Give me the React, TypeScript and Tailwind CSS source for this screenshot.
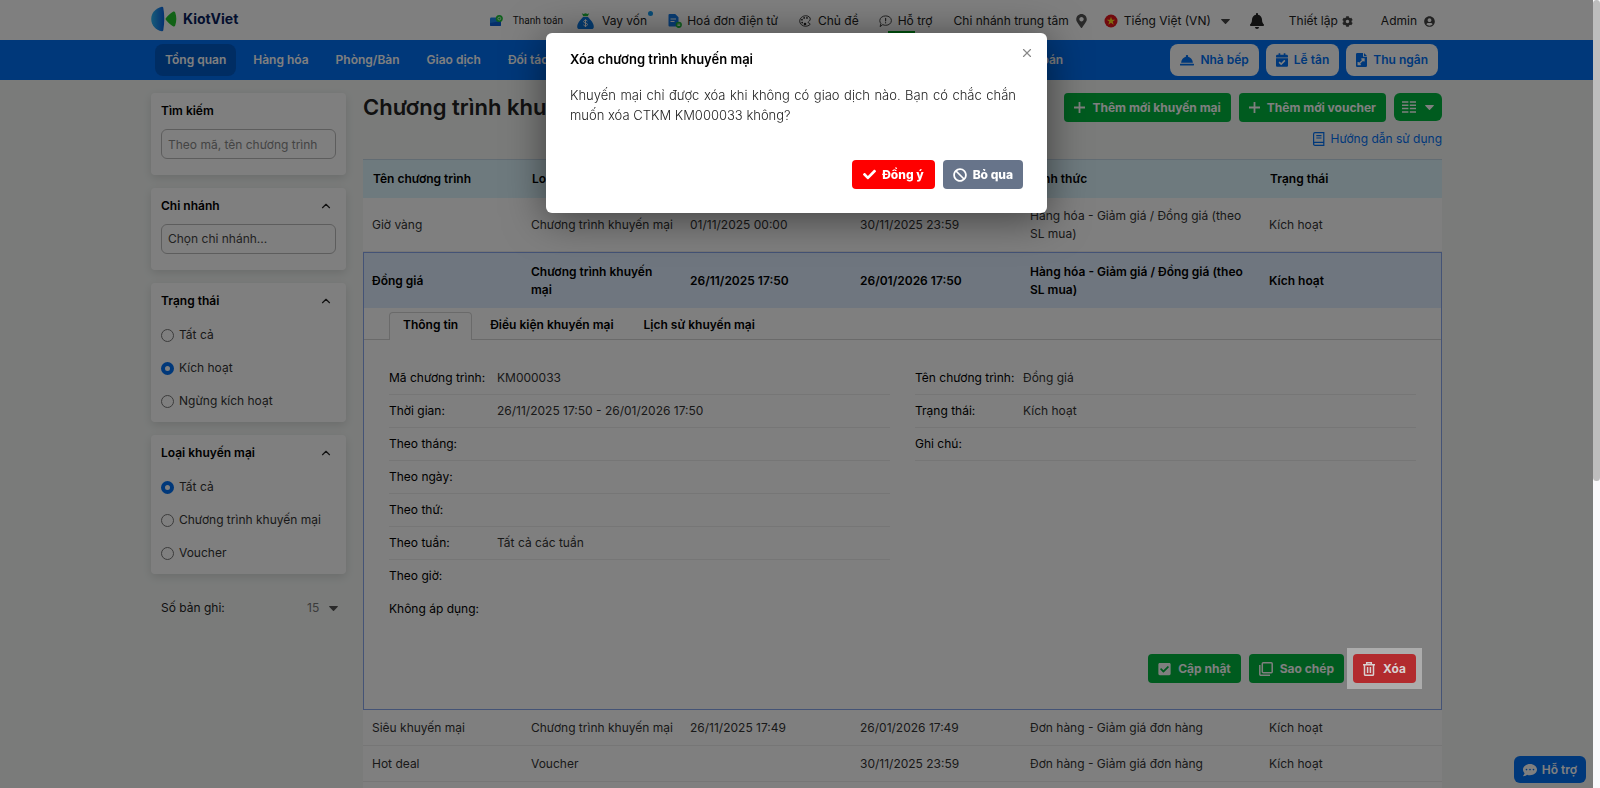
import { useState, type ReactNode } from "react";
import {
  FaBan,
  FaBell,
  FaCalendarCheck,
  FaCheck,
  FaCheckSquare,
  FaCog,
  FaCommentDots,
  FaMapMarkerAlt,
  FaUserCircle,
} from "react-icons/fa";
import { IoColorPaletteOutline } from "react-icons/io5";
import { ChevronUp, X } from "lucide-react";

const NAV_ITEMS = [
  "Tổng quan",
  "Hàng hóa",
  "Phòng/Bàn",
  "Giao dịch",
  "Đối tác",
  "Nhân viên",
  "Bán hàng",
  "Tài chính",
  "Báo cáo",
  "Phân tích",
  "Thuế & Kế toán",
];

const COLUMNS = [
  "Tên chương trình",
  "Loại chương trình",
  "Từ ngày",
  "Đến ngày",
  "Hình thức",
  "Trạng thái",
];

const ROWS = [
  {
    cells: [
      "Giờ vàng",
      "Chương trình khuyến mại",
      "01/11/2025 00:00",
      "30/11/2025 23:59",
      "Hàng hóa - Giảm giá / Đồng giá (theo SL mua)",
      "Kích hoạt",
    ],
  },
  {
    selected: true,
    cells: [
      "Đồng giá",
      "Chương trình khuyến mại",
      "26/11/2025 17:50",
      "26/01/2026 17:50",
      "Hàng hóa - Giảm giá / Đồng giá (theo SL mua)",
      "Kích hoạt",
    ],
  },
  {
    cells: [
      "Siêu khuyến mại",
      "Chương trình khuyến mại",
      "26/11/2025 17:49",
      "26/01/2026 17:49",
      "Đơn hàng - Giảm giá đơn hàng",
      "Kích hoạt",
    ],
  },
  {
    cells: [
      "Hot deal",
      "Voucher",
      "",
      "30/11/2025 23:59",
      "Đơn hàng - Giảm giá đơn hàng",
      "Kích hoạt",
    ],
  },
];

const LEFT_FIELDS = [
  ["Mã chương trình:", "KM000033"],
  ["Thời gian:", "26/11/2025 17:50 - 26/01/2026 17:50"],
  ["Theo tháng:", ""],
  ["Theo ngày:", ""],
  ["Theo thứ:", ""],
  ["Theo tuần:", "Tất cả các tuần"],
  ["Theo giờ:", ""],
  ["Không áp dụng:", ""],
];

const RIGHT_FIELDS = [
  ["Tên chương trình:", "Đồng giá"],
  ["Trạng thái:", "Kích hoạt"],
  ["Ghi chú:", ""],
];

const Logo = () => (
  <svg className="h-[26px] w-[26px]" viewBox="0 0 26 26">
    <defs>
      <linearGradient id="logoBlue" x1="0" x2="1">
        <stop offset="0" stopColor="#2fb8f5" />
        <stop offset="1" stopColor="#0a63e0" />
      </linearGradient>
    </defs>
    <path d="M10.800.7c.8-.1 1.300.3 1.500 1.100 1.300 7.300 1.300 15 0 22.400-.2.800-.7 1.200-1.500 1.100C4.600 24 .2 19 .2 13S4.600 2 10.800.7z" fill="url(#logoBlue)" />
    <path d="M14.800 12.300c2.200-2.700 4.700-4.900 7.200-6.500 1-.6 1.800-.3 2.200.8 1.500 4.200 1.500 8.600 0 12.800-.4 1.100-1.200 1.400-2.200.8-2.500-1.600-5-3.800-7.200-6.500-.4-.5-.4-.9 0-1.400z" fill="#22c52c" />
  </svg>
);

const PaymentIcon = () => (
  <svg className="h-3 w-[13px]" viewBox="0 0 13 12">
    <rect x="0" y="2.500" width="11" height="8.500" rx="1.200" fill="#1a86ee" />
    <path d="M0 8l11-2v4a1 1 0 0 1-1 1H1a1 1 0 0 1-1-1z" fill="#0b5fd6" />
    <circle cx="9.300" cy="3.600" r="3.500" fill="#1fc13a" />
    <circle cx="9.300" cy="3.600" r="1.400" fill="none" stroke="#d8ffd9" strokeWidth=".9" />
  </svg>
);

const MoneyBagIcon = () => (
  <svg className="h-4 w-[17px]" viewBox="0 0 17 16">
    <path d="M4.800.3l1.700.7L8.500.2l2 .8 1.700-.7-1.500 3H6.300z" fill="#1fb93a" />
    <path d="M6 4h5l2.800 3.200c1.800 2 3 4.300 3 6.500 0 1.500-.8 2.300-2.200 2.300H2.400C1 16 .2 15.200.2 13.700c0-2.200 1.200-4.500 3-6.500z" fill="#0b78e3" />
    <path d="M10.400 8.200c-.4-.6-1-.9-1.900-.9-1.100 0-1.900.5-1.900 1.300 0 1.900 3.900.9 3.900 2.900 0 .9-.8 1.400-2 1.400-1 0-1.700-.4-2.100-1.100M8.500 6.300v7.700" fill="none" stroke="#fff" strokeWidth="1" />
  </svg>
);

const InvoiceIcon = () => (
  <svg className="h-[14px] w-[14px]" viewBox="0 0 14 14">
    <path d="M1.500 0h5.700L10.500 3.300v8.200a1 1 0 0 1-1 1h-8a1 1 0 0 1-1-1V1a1 1 0 0 1 1-1z" fill="#1278e6" />
    <path d="M2.500 5h5.500M2.500 7.500h4" stroke="#fff" strokeWidth="1.200" />
    <circle cx="10.800" cy="10.800" r="3.100" fill="#1fb93a" />
    <path d="M9.400 10.200h2.800M12.200 11.500H9.400" stroke="#fff" strokeWidth=".8" />
  </svg>
);

const SupportIcon = () => (
  <svg className="h-[12px] w-[13px]" viewBox="0 0 13 12" fill="none" stroke="#444" strokeLinecap="round">
    <path d="M1.200 11.300l.7-2.800C1.100 7.700.8 6.700.8 5.600.8 2.900 3.400.9 6.700.9s5.700 2 5.700 4.700-2.500 4.700-5.700 4.700c-.9 0-1.800-.1-2.600-.5z" />
    <path d="M6.600 3.300v2.500M6.600 7.700v.1" strokeWidth="1.200" />
  </svg>
);

const FlagIcon = () => (
  <svg className="h-[14px] w-[14px]" viewBox="0 0 14 14">
    <circle cx="7" cy="7" r="6.500" fill="#e3141d" />
    <path d="M7 2.700l1.050 3h3.200L8.700 7.600l.95 3.100L7 8.850 4.350 10.700l.95-3.100L2.750 5.700h3.200z" fill="#ffdb1f" />
  </svg>
);

const ClocheIcon = () => (
  <svg className="h-[11px] w-[14px]" viewBox="0 0 14 11" fill="#0070f4">
    <path d="M6 1.700a1.200 1.200 0 1 1 2 0c2.700.500 4.600 2.900 4.900 6.100H1.100C1.400 4.600 3.300 2.200 6 1.700zM.4 8.800h13.200c.2 0 .4.200.4.400v.9c0 .300-.2.500-.5.500H.5a.5.5 0 0 1-.5-.5v-.9c0-.2.2-.4.4-.4z" />
  </svg>
);

const CashierIcon = () => (
  <svg className="h-[14px] w-[11px]" viewBox="0 0 11 14">
    <path d="M1.300 0H7v3.700h4v9a1.300 1.300 0 0 1-1.300 1.300H1.300A1.300 1.300 0 0 1 0 12.700V1.300A1.300 1.300 0 0 1 1.300 0zM8 0l3 2.900H8z" fill="#0070f4" />
    <path d="M2.200 11.500l5.600-5.300M5.300 6h2.700v2.600M2.200 8.900v2.600h2.600" fill="none" stroke="#fff" strokeWidth="1.300" />
  </svg>
);

const PlusIcon = () => (
  <svg className="h-[11px] w-[11px]" viewBox="0 0 11 11" stroke="#fff" strokeWidth="1.800">
    <path d="M5.500 0v11M0 5.500h11" />
  </svg>
);

const Caret = () => (
  <svg className="h-[5px] w-[9px]" viewBox="0 0 9 5" fill="currentColor">
    <path d="M.6 0h7.800a.5.5 0 0 1 .4.800L5 4.700a.7.7 0 0 1-1 0L.2.8A.5.5 0 0 1 .6 0z" />
  </svg>
);

const ColumnsIcon = () => (
  <svg className="h-3 w-[14px]" viewBox="0 0 14 12" stroke="#fff" strokeWidth="1.500">
    <path d="M0 1h6.400M0 4.300h6.400M0 7.600h6.400M0 11h6.400M7.800 1H14M7.800 4.300H14M7.800 7.600H14M7.800 11H14" />
  </svg>
);

const BookIcon = () => (
  <svg className="h-[14px] w-3" viewBox="0 0 12 14" fill="none" stroke="#0070f4" strokeWidth="1.200">
    <path d="M11.400 10.400H2a1.400 1.400 0 0 0 0 2.900h9.400M11.400.7H2A1.400 1.400 0 0 0 .600 2v10M10.800.7v12.600M3.300 3.600h5.200M3.300 6h5.200" />
  </svg>
);

const CopyIcon = () => (
  <svg className="h-[14px] w-[14px]" viewBox="0 0 14 14" fill="none" stroke="#fff" strokeWidth="1.500">
    <rect x="3.300" y=".8" width="9.900" height="9.900" rx="1" />
    <path d="M.8 3v9.200a1 1 0 0 0 1 1H11" />
  </svg>
);

const TrashIcon = () => (
  <svg className="h-[14px] w-3" viewBox="0 0 12 14" fill="none" stroke="currentColor" strokeWidth="1.500">
    <path d="M0 2.700h12M3.700 2.500V.8h4.600v1.700M1.500 3v9.300a1 1 0 0 0 1 1h7a1 1 0 0 0 1-1V3M4.600 5v6M7.400 5v6" />
  </svg>
);

function GreenButton({ icon, children }: { icon: ReactNode; children: ReactNode }) {
  return (
    <button className="flex h-[29px] items-center gap-[7px] rounded bg-[#00b63e] px-[10px] font-bold text-white">
      {icon}
      {children}
    </button>
  );
}

function NavButton({ icon, children }: { icon: ReactNode; children: ReactNode }) {
  return (
    <button className="flex h-8 items-center gap-[6px] rounded-lg bg-white px-[10px] font-semibold text-[#0070f4]">
      {icon}
      {children}
    </button>
  );
}

function Card({ title, collapsible, children }: { title: string; collapsible?: boolean; children: ReactNode }) {
  return (
    <section className="rounded bg-white px-[10px] shadow-[0_3px_10px_rgba(0,0,0,0.12)]">
      <div className="flex h-9 items-center justify-between">
        <h2 className="font-semibold text-black">{title}</h2>
        {collapsible && (
          <button aria-label={title} className="mr-[3px]">
            <ChevronUp className="h-[14px] w-[14px] text-[#222]" strokeWidth={2} />
          </button>
        )}
      </div>
      {children}
    </section>
  );
}

function RadioGroup({
  name,
  options,
  value,
  onChange,
}: {
  name: string;
  options: string[];
  value: string;
  onChange: (value: string) => void;
}) {
  return (
    <div className="flex flex-col gap-px pb-[5px]">
      {options.map((option) => (
        <label key={option} className="flex h-8 items-center gap-[5px] text-[#333]">
          <input
            type="radio"
            name={name}
            checked={value === option}
            onChange={() => onChange(option)}
            className="h-[13px] w-[13px] appearance-none rounded-full border border-[#777] checked:border-4 checked:border-[#0070f4]"
          />
          {option}
        </label>
      ))}
    </div>
  );
}

function FieldList({ fields }: { fields: string[][] }) {
  return (
    <dl className="flex-1">
      {fields.map(([label, value], i) => (
        <div
          key={label}
          className={`flex h-[33px] items-center border-b ${i > 5 ? "border-transparent" : "border-[#ececec]"}`}
        >
          <dt className="w-[108px] text-black">{label}</dt>
          <dd className="text-[#333]">{value}</dd>
        </div>
      ))}
    </dl>
  );
}

function PromotionDetail() {
  return (
    <div>
      <div className="flex h-8 items-end border-b border-[#d5d5d5] pl-[25px] font-semibold text-black">
        <button className="-mb-px h-7 rounded-t-sm border border-b-0 border-[#d5d5d5] bg-white px-[13px] pb-[3px]">
          Thông tin
        </button>
        <button className="h-7 px-[18px]">Điều kiện khuyến mại</button>
        <button className="h-7 px-3">Lịch sử khuyến mại</button>
      </div>
      <div className="flex gap-[25px] px-[25px] pt-[22px]">
        <FieldList fields={LEFT_FIELDS} />
        <FieldList fields={RIGHT_FIELDS} />
      </div>
      <div className="flex items-center justify-end pt-[22px] pr-[19px] pb-5">
        <div className="mr-[3px] flex gap-2">
          <GreenButton icon={<FaCheckSquare className="h-[14px] w-[13px]" />}>Cập nhật</GreenButton>
          <GreenButton icon={<CopyIcon />}>Sao chép</GreenButton>
        </div>
        <div className="relative z-50 bg-[#acacac] p-[6px]">
          <button className="flex h-[29px] items-center gap-2 rounded bg-[#b22b2e] px-[10px] font-bold text-[#d8d0d0]">
            <TrashIcon />
            Xóa
          </button>
        </div>
      </div>
    </div>
  );
}

function TopBar() {
  return (
    <header className="bg-white">
      <div className="mx-auto flex h-10 max-w-[1291px] items-center justify-between pr-[7px] text-[#222]">
        <div className="flex items-center gap-[6px] pb-[3px]">
          <Logo />
          <span className="text-[14px] font-bold text-[#07205c]">KiotViet</span>
        </div>
        <div className="flex items-center pt-[2px]">
          <a href="#" className="flex items-center gap-[10px] font-[family-name:Roboto] text-[10px]">
            <PaymentIcon />
            Thanh toán
          </a>
          <a href="#" className="relative ml-[14px] flex items-center gap-2">
            <MoneyBagIcon />
            Vay vốn
            <span className="absolute -top-[1px] -right-[6px] h-[5px] w-[5px] rounded-full bg-[#1098ef]" />
          </a>
          <a href="#" className="ml-[21px] flex items-center gap-[5px]">
            <InvoiceIcon />
            Hoá đơn điện tử
          </a>
          <a href="#" className="ml-5 flex items-center gap-[6px]">
            <IoColorPaletteOutline className="h-[14px] w-[14px]" />
            Chủ đề
          </a>
          <a href="#" className="relative ml-5 flex items-center gap-[6px]">
            <SupportIcon />
            Hỗ trợ
            <span className="absolute top-[19px] left-[9px] h-3 w-[27px] bg-[#00a81c]" />
          </a>
          <a href="#" className="ml-[21px] flex items-center gap-[7px]">
            Chi nhánh trung tâm
            <FaMapMarkerAlt className="h-[14px] w-[11px] text-[#555]" />
          </a>
          <a href="#" className="ml-[17px] flex items-center gap-[6px]">
            <FlagIcon />
            Tiếng Việt (VN)
            <span className="ml-1 text-[#444]">
              <Caret />
            </span>
          </a>
          <button aria-label="Thông báo" className="ml-[20px]">
            <FaBell className="h-4 w-[14px] text-[#222]" />
          </button>
          <a href="#" className="ml-[25px] flex items-center gap-1">
            Thiết lập
            <FaCog className="h-[11px] w-[11px] text-[#444]" />
          </a>
          <a href="#" className="ml-7 flex items-center gap-[7px]">
            Admin
            <FaUserCircle className="h-[11px] w-[11px] text-[#444]" />
          </a>
        </div>
      </div>
    </header>
  );
}

function NavBar() {
  return (
    <div className="bg-[#0070f4]">
      <div className="mx-auto flex h-10 max-w-[1291px] items-center justify-between px-1">
        <nav className="flex gap-[7px] font-semibold whitespace-nowrap text-white">
          {NAV_ITEMS.map((item, i) => (
            <a
              key={item}
              href="#"
              className={`flex h-8 items-center rounded-lg px-[10px] ${i === 0 ? "bg-[#005ac7]" : ""}`}
            >
              {item}
            </a>
          ))}
        </nav>
        <div className="flex gap-[7px]">
          <NavButton icon={<ClocheIcon />}>Nhà bếp</NavButton>
          <NavButton icon={<FaCalendarCheck className="h-[14px] w-3" />}>Lễ tân</NavButton>
          <NavButton icon={<CashierIcon />}>Thu ngân</NavButton>
        </div>
      </div>
    </div>
  );
}

function Filters() {
  const [status, setStatus] = useState("Kích hoạt");
  const [kind, setKind] = useState("Tất cả");

  return (
    <aside className="flex w-[195px] shrink-0 flex-col gap-[13px]">
      <Card title="Tìm kiếm">
        <input
          aria-label="Tìm kiếm"
          placeholder="Theo mã, tên chương trình"
          className="mb-4 block h-[30px] w-full rounded-md border border-[#bbb] px-[6px] placeholder:text-[#888]"
        />
      </Card>
      <Card title="Chi nhánh" collapsible>
        <input
          aria-label="Chi nhánh"
          placeholder="Chọn chi nhánh..."
          className="mb-4 block h-[30px] w-full rounded-md border border-[#bbb] px-[6px] pb-[2px] placeholder:text-[#444]"
        />
      </Card>
      <Card title="Trạng thái" collapsible>
        <RadioGroup
          name="status"
          options={["Tất cả", "Kích hoạt", "Ngừng kích hoạt"]}
          value={status}
          onChange={setStatus}
        />
      </Card>
      <Card title="Loại khuyến mại" collapsible>
        <RadioGroup
          name="kind"
          options={["Tất cả", "Chương trình khuyến mại", "Voucher"]}
          value={kind}
          onChange={setKind}
        />
      </Card>
      <div className="flex items-center justify-between pt-3 pr-2 pl-[10px]">
        <label htmlFor="pageSize">Số bản ghi:</label>
        <div className="flex items-center text-[#555]">
          <select id="pageSize" className="w-[22px] appearance-none text-[#777]">
            <option>15</option>
          </select>
          <Caret />
        </div>
      </div>
    </aside>
  );
}

function PromotionTable() {
  return (
    <div className="bg-white pb-5">
      <table className="w-full table-fixed border-separate border-spacing-0 text-left leading-[18px]">
        <colgroup>
          <col className="w-[159px]" />
          <col className="w-[159px]" />
          <col className="w-[170px]" />
          <col className="w-[170px]" />
          <col className="w-[239px]" />
          <col />
        </colgroup>
        <thead>
          <tr>
            {COLUMNS.map((column) => (
              <th
                key={column}
                className="h-[39px] border-t border-[#c4d8e6] bg-[#dcf4fc] px-[10px] font-semibold text-black"
              >
                {column}
              </th>
            ))}
          </tr>
        </thead>
        {ROWS.map((row) => (
          <tbody key={row.cells[0]}>
            <tr>
              {row.cells.map((cell, i) => (
                <td
                  key={i}
                  className={
                    row.selected
                      ? "h-14 border-t border-[#88a6ec] bg-[#dfedff] px-[9px] font-semibold text-black first:border-l first:pl-2 last:border-r"
                      : "h-9 border-b border-[#ececec] pt-[9px] pr-1 pb-2 pl-[9px] text-[#333]"
                  }
                >
                  {cell}
                </td>
              ))}
            </tr>
            {row.selected && (
              <tr>
                <td colSpan={6} className="border border-t-0 border-[#88a6ec]">
                  <PromotionDetail />
                </td>
              </tr>
            )}
          </tbody>
        ))}
      </table>
    </div>
  );
}

function ConfirmDialog() {
  return (
    <div className="fixed inset-y-0 right-[7px] left-0 z-[60] flex items-start justify-center pt-[33px]">
      <div
        role="dialog"
        aria-labelledby="dialogTitle"
        className="relative w-[501px] rounded-md bg-white px-6 pt-4 pb-6 shadow-[0_5px_40px_rgba(0,0,0,0.5)]"
      >
        <button aria-label="Đóng" className="absolute top-[13px] right-[13px]">
          <X className="h-[14px] w-[14px] text-[#888]" strokeWidth={2} />
        </button>
        <h2 id="dialogTitle" className="text-[13px] leading-5 font-semibold text-black">
          Xóa chương trình khuyến mại
        </h2>
        <p className="mt-4 mr-[7px] text-justify text-[13px] leading-5 font-light text-[#222]">
          Khuyến mại chỉ được xóa khi không có giao dịch nào. Bạn có chắc chắn muốn xóa CTKM KM000033 không?
        </p>
        <div className="mt-[35px] flex justify-end gap-2">
          <button className="flex h-[29px] items-center gap-[6px] rounded bg-[#ff0000] px-[11px] font-extrabold text-white">
            <FaCheck className="h-[13px] w-[13px]" />
            Đồng ý
          </button>
          <button className="flex h-[29px] items-center gap-[6px] rounded bg-[#67748a] px-[10px] font-extrabold text-white">
            <FaBan className="h-[14px] w-[14px]" />
            Bỏ qua
          </button>
        </div>
      </div>
    </div>
  );
}

export default function App() {
  return (
    <div className="flex h-screen overflow-hidden bg-[#f4f7f5] font-[Inter,sans-serif] text-[12px] leading-[18px] text-[#222]">
      <div className="min-w-0 flex-1">
        <TopBar />
        <NavBar />
        <div className="mx-auto flex max-w-[1291px] gap-[17px] pt-[13px]">
          <Filters />
          <main className="min-w-0 flex-1">
            <div className="flex items-start justify-between">
              <h1 className="text-[22px] leading-7 font-semibold">Chương trình khuyến mại</h1>
              <div className="flex gap-2">
                <GreenButton icon={<PlusIcon />}>Thêm mới khuyến mại</GreenButton>
                <GreenButton icon={<PlusIcon />}>Thêm mới voucher</GreenButton>
                <button
                  aria-label="Chọn cột"
                  className="flex h-7 items-center gap-[9px] rounded-md bg-[#00b63e] px-2 text-white"
                >
                  <ColumnsIcon />
                  <Caret />
                </button>
              </div>
            </div>
            <div className="flex h-[37px] justify-end pt-2">
              <a href="#" className="flex h-[18px] items-center gap-[5px] text-[#0070f4]">
                <BookIcon />
                Hướng dẫn sử dụng
              </a>
            </div>
            <PromotionTable />
          </main>
        </div>
      </div>
      <div className="relative z-50 w-[7px] bg-[#f9f9fb]">
        <div className="h-[61%] rounded-full bg-[#bdbdbd]" />
      </div>

      <button className="fixed right-[14px] bottom-[5px] flex h-[27px] items-center gap-[5px] rounded-md bg-[#0070f4] px-[9px] font-semibold text-white">
        <FaCommentDots className="h-[14px] w-[14px]" />
        Hỗ trợ
      </button>

      <div className="fixed inset-y-0 right-[7px] left-0 z-40 bg-black/50" />
      <ConfirmDialog />
    </div>
  );
}
